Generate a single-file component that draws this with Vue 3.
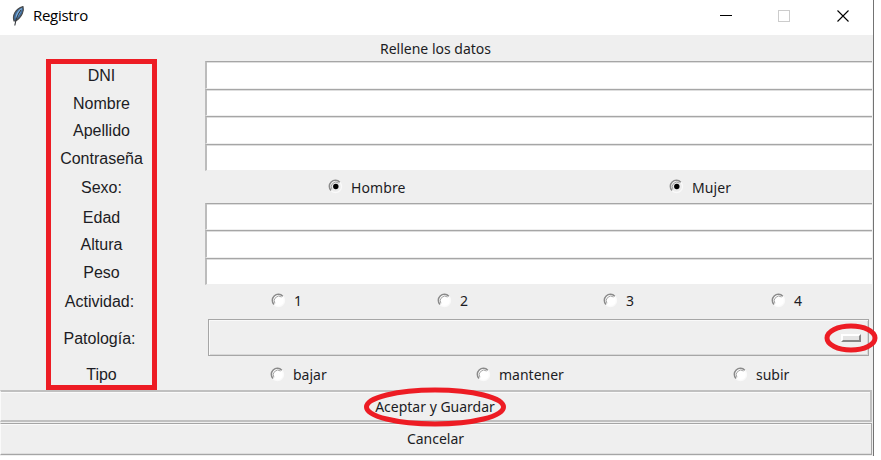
<script setup>
const rows = [
  { label: 'DNI', type: 'entry', size: 'h28' },
  { label: 'Nombre', type: 'entry', size: 'h27' },
  { label: 'Apellido', type: 'entry', size: 'h28' },
  { label: 'Contraseña', type: 'entry', size: 'h27' },
  { label: 'Sexo:', type: 'radio', size: 'sexo', on: true, options: ['Hombre', 'Mujer'] },
  { label: 'Edad', type: 'entry', size: 'h27' },
  { label: 'Altura', type: 'entry', size: 'h28' },
  { label: 'Peso', type: 'entry', size: 'h27' },
  { label: 'Actividad:', type: 'radio', size: 'actividad', options: ['1', '2', '3', '4'] },
  { label: 'Patología:', type: 'menu', size: 'patologia' },
  { label: 'Tipo', type: 'radio', size: 'tipo', options: ['bajar', 'mantener', 'subir'] },
]
</script>

<template>
  <div class="window">
    <header class="titlebar">
      <svg class="feather" width="14" height="22" viewBox="0 0 14 22">
        <path d="M3 16C1.2 11 4 4 12 1.6C13.2 5 11.5 12 4.6 16Z" fill="#3f6c9c" stroke="#4a4a4a" stroke-width="1.1" />
        <path d="M4.6 12.5C5 8 8 4 11 3C10.5 6 8.5 10.5 5.6 13.5Z" fill="#7fb0de" />
        <path d="M10 5C7 9 5 13 3.8 20.5" fill="none" stroke="#33373c" stroke-width="1.1" />
      </svg>
      <span class="title">Registro</span>
      <svg class="controls" width="130" height="14" viewBox="0 0 130 14">
        <path d="M1 6.5H13" stroke="#000" />
        <rect x="59.5" y="1.5" width="11" height="11" fill="none" stroke="#ccc" />
        <path d="M118.5 1.5L129.5 12.5M129.5 1.5L118.5 12.5" stroke="#000" stroke-width="1.1" />
      </svg>
    </header>
    <div class="heading"><span>Rellene los datos</span></div>
    <div v-for="row in rows" :key="row.label" class="row" :class="row.size">
      <div class="label">{{ row.label }}</div>
      <div v-if="row.type === 'entry'" class="entry"></div>
      <div v-else-if="row.type === 'radio'" class="options">
        <div v-for="option in row.options" :key="option" class="option">
          <svg width="15" height="15" viewBox="0 0 15 15">
            <circle cx="7.5" cy="7.5" r="6" :fill="row.on ? '#ececec' : '#fff'" stroke="#fafafa" stroke-width="1.3" />
            <path d="M3 11.6A6 6 0 0 1 11.8 3.2" fill="none" stroke="#8a8a8a" stroke-width="1.5" />
            <path d="M3.9 10.3A4.7 4.7 0 0 1 10.6 4" fill="none" stroke="#8f8f8f" stroke-width=".8" />
            <circle v-if="row.on" cx="7.8" cy="7.5" r="2.7" fill="#000" />
          </svg>
          <span>{{ option }}</span>
        </div>
      </div>
      <div v-else class="menu"><i class="indicator"></i></div>
    </div>
    <div class="button accept"><span>Aceptar y Guardar</span></div>
    <div class="button cancel"><span>Cancelar</span></div>

    <div class="mark-labels"></div>
    <svg class="mark-menu" width="54" height="30" viewBox="0 0 54 30">
      <ellipse cx="27" cy="15" rx="24" ry="12" fill="none" stroke="#ed1c24" stroke-width="5" />
    </svg>
    <svg class="mark-accept" width="144" height="40" viewBox="0 0 144 40">
      <ellipse cx="72" cy="20" rx="68.5" ry="17" fill="none" stroke="#ed1c24" stroke-width="5" />
    </svg>
  </div>
</template>

<style>
body { margin: 0; background: #fff; }
</style>

<style scoped>
.window {
  position: relative;
  box-sizing: border-box;
  width: 874px;
  height: 456px;
  background: #efefef;
  border-right: 1px solid #737373;
  color: #1c1c24;
  font: 14px/20px "Noto Sans", sans-serif;
}
.titlebar {
  display: flex;
  align-items: center;
  box-sizing: border-box;
  height: 35px;
  padding: 0 24px 4px 11px;
  background: #fff;
  color: #000;
}
.title { margin-left: 8px; padding-bottom: 2px; font: 15px/20px "Open Sans", sans-serif; letter-spacing: -0.3px; }
.controls { margin-left: auto; }
.heading { height: 26px; padding-right: 2px; text-align: center; line-height: 27px; }
.row { display: grid; grid-template-columns: 205px 1fr; }
.h27 { height: 27px; }
.h28 { height: 28px; }
.sexo { height: 32px; }
.actividad { height: 32px; }
.patologia { height: 41px; }
.tipo { height: 32px; }
.label {
  display: flex;
  align-items: center;
  justify-content: center;
  padding: 2px 2px 0 0;
  font: 16px/20px "Liberation Sans", sans-serif;
}
.actividad .label, .patologia .label { padding-right: 6px; }
.actividad .label, .sexo .label { padding-top: 1px; }
.entry {
  margin-right: 1px;
  background: #fff;
  border-top: 1px solid #a6a6a6;
  border-left: 2px solid #bcbcbc;
  border-bottom: 1px solid #efefef;
  box-shadow: inset 0 1px #dedede;
}
.options { display: grid; align-items: center; }
.sexo .options { grid-template-columns: 341px 1fr; padding: 1px 0 0 123px; letter-spacing: 0.1px; }
.actividad .options { grid-template-columns: 166px 166px 168px 1fr; padding-left: 66px; }
.tipo .options { grid-template-columns: 206px 257px 1fr; padding: 2px 0 0 65px; }
.option { display: flex; align-items: center; gap: 8px; }
.option svg { margin-top: -2px; }
.menu {
  display: flex;
  align-items: center;
  justify-content: flex-end;
  box-sizing: border-box;
  height: 37px;
  margin: 2px 4px 0 3px;
  padding-right: 7px;
  border: 1px solid #a6a6a6;
  box-shadow: inset 1px 1px #f9f9f9, inset -1px -1px #d8d8d8;
}
.indicator {
  box-sizing: border-box;
  width: 20px;
  height: 8px;
  border: 2px solid;
  border-color: #fff #858585 #858585 #fff;
  background: #e4e4e4;
}
.button {
  box-sizing: border-box;
  height: 32px;
  padding-right: 1px;
  margin-right: 1px;
  text-align: center;
  line-height: 29px;
  border: 2px solid #c0c0c0;
  border-left: 1px solid #fafafa;
  box-shadow: inset 0 1px #fafafa;
}
.cancel { margin-top: 1px; border: 1px solid #a5a5a5; border-left-color: #fafafa; line-height: 30px; box-shadow: inset 0 1px #fafafa, inset 0 -1px #dedede; }
.mark-labels {
  position: absolute;
  left: 46px;
  top: 59px;
  box-sizing: border-box;
  width: 111px;
  height: 331px;
  border: 5px solid #ed1c24;
}
.mark-menu { position: absolute; left: 824px; top: 323px; }
.mark-accept { position: absolute; left: 363px; top: 387px; }
</style>
